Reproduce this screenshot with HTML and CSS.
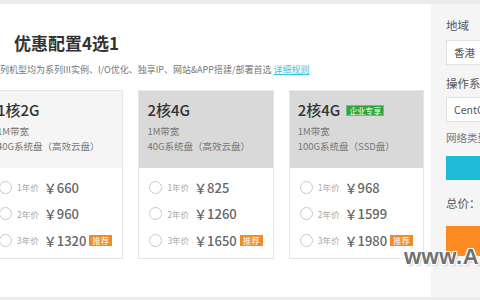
FILE: index.html
```html
<!DOCTYPE html>
<html lang="zh-CN">
<head>
    <meta charset="UTF-8">
    <meta name="viewport" content="width=device-width, initial-scale=1.0">
    <title>优惠配置4选1</title>
    <link rel="stylesheet" href="styles.css">
</head>
<body>
    <div class="page">
        <div class="strip"></div>

        <div class="main">
            <!-- 左侧：套餐列表 -->
            <div class="content">
                <h1 class="title">优惠配置4选1</h1>
                <p class="intro">本系列机型均为系列III实例、I/O优化、独享IP、网站&amp;APP搭建/部署首选 <a href="#">详细规则</a></p>

                <div class="cards">
                    <div class="card">
                        <div class="card-head light">
                            <div class="card-title">1核2G</div>
                            <div class="spec">1M带宽</div>
                            <div class="spec">40G系统盘（高效云盘）</div>
                        </div>
                        <div class="card-body">
                            <label class="price-row"><span class="radio"></span><span class="term">1年价</span><span class="price">￥660</span></label>
                            <label class="price-row"><span class="radio"></span><span class="term">2年价</span><span class="price">￥960</span></label>
                            <label class="price-row"><span class="radio"></span><span class="term">3年价</span><span class="price">￥1320</span><span class="tag">推荐</span></label>
                        </div>
                    </div>

                    <div class="card">
                        <div class="card-head">
                            <div class="card-title">2核4G</div>
                            <div class="spec">1M带宽</div>
                            <div class="spec">40G系统盘（高效云盘）</div>
                        </div>
                        <div class="card-body">
                            <label class="price-row"><span class="radio"></span><span class="term">1年价</span><span class="price">￥825</span></label>
                            <label class="price-row"><span class="radio"></span><span class="term">2年价</span><span class="price">￥1260</span></label>
                            <label class="price-row"><span class="radio"></span><span class="term">3年价</span><span class="price">￥1650</span><span class="tag">推荐</span></label>
                        </div>
                    </div>

                    <div class="card">
                        <div class="card-head">
                            <div class="card-title">2核4G <span class="vip">企业专享</span></div>
                            <div class="spec">1M带宽</div>
                            <div class="spec">100G系统盘（SSD盘）</div>
                        </div>
                        <div class="card-body">
                            <label class="price-row"><span class="radio"></span><span class="term">1年价</span><span class="price">￥968</span></label>
                            <label class="price-row"><span class="radio"></span><span class="term">2年价</span><span class="price">￥1599</span></label>
                            <label class="price-row"><span class="radio"></span><span class="term">3年价</span><span class="price">￥1980</span><span class="tag">推荐</span></label>
                        </div>
                    </div>
                </div>
            </div>

            <!-- 右侧：购买选项 -->
            <div class="side">
                <div class="side-label">地域</div>
                <div class="select">香港</div>
                <div class="side-label os">操作系统</div>
                <div class="select os-select">CentOS 7.2 64位</div>
                <div class="side-label net">网络类型</div>
                <div class="btn-net">专有网络</div>
                <div class="side-label total">总价：</div>
                <div class="btn-buy">立即购买</div>
            </div>
        </div>

        <div class="strip bottom"></div>

        <div class="watermark">www.A</div>
    </div>
</body>
</html>
```

FILE: styles.css
```css
body {
    margin: 0;
    font-family: "Noto Sans CJK SC", "Noto Sans", sans-serif;
    color: #333;
    background-color: #fff;
}
.page {
    position: relative;
    width: 480px;
    height: 300px;
    overflow: hidden;
    display: flex;
    flex-direction: column;
}
.strip {
    height: 4px;
    background-color: #ebebeb;
}
.strip.bottom {
    height: 3px;
}
.main {
    flex: 1;
    display: flex;
    min-height: 0;
}
.content {
    flex: 1;
    min-width: 0;
    overflow: hidden;
    padding-top: 27px;
}
.title {
    margin: 0 0 0 14px;
    font-size: 17px;
    line-height: 24px;
    font-weight: 700;
    color: #333;
}
.intro {
    margin: 8px 0 0 -18px;
    font-size: 9px;
    line-height: 14px;
    color: #777;
    white-space: nowrap;
}
.intro a {
    color: #3cc3dd;
    text-decoration: underline;
}
.cards {
    display: flex;
    gap: 15px;
    margin: 13px 0 0 -12px;
}
.card {
    flex: 0 0 132px;
    border: 1px solid #e6e6e6;
    box-sizing: border-box;
    background-color: #fff;
}
.card-head {
    background-color: #d9d9d9;
    padding: 9px 8px 14px;
    height: 77px;
    box-sizing: border-box;
}
.card-head.light {
    background-color: #f5f5f5;
}
.card-title {
    display: flex;
    align-items: center;
    gap: 6px;
    font-size: 15px;
    line-height: 20px;
    font-weight: 500;
    color: #333;
    margin-bottom: 4px;
}
.vip {
    font-size: 8px;
    line-height: 9px;
    padding: 0 2px;
    color: #fff;
    background-color: #2ea63c;
    border: 1px solid #66c66f;
    font-weight: 400;
}
.spec {
    font-size: 9.5px;
    line-height: 15px;
    color: #777;
    white-space: nowrap;
}
.card-body {
    padding: 6px 10px 4px;
}
.price-row {
    display: flex;
    align-items: center;
    height: 26.5px;
    white-space: nowrap;
}
.radio {
    width: 11px;
    height: 11px;
    border: 1px solid #c9c9c9;
    border-radius: 50%;
    margin-right: 5px;
}
.term {
    font-size: 8.5px;
    color: #aaa;
    margin-right: 5px;
}
.price {
    font-size: 13px;
    color: #666;
    font-weight: 500;
}
.tag {
    margin-left: 3px;
    font-size: 8.5px;
    line-height: 11px;
    padding: 0 3px;
    color: #fff;
    background-color: #f28b25;
}
.side {
    flex: 0 0 49px;
    background-color: #f5f5f5;
    padding-left: 15px;
    box-sizing: border-box;
    overflow: hidden;
    padding-top: 13px;
}
.side-label {
    width: 150px;
    font-size: 11.5px;
    line-height: 16px;
    color: #555;
}
.side-label.os {
    margin-top: 10px;
}
.side-label.net {
    margin-top: 8px;
    font-size: 10.5px;
    color: #777;
}
.side-label.total {
    margin-top: 15px;
}
.select {
    width: 150px;
    height: 25px;
    margin-top: 7px;
    padding-left: 7px;
    box-sizing: border-box;
    background-color: #fff;
    border: 1px solid #e2e2e2;
    font-size: 10.5px;
    line-height: 23px;
    color: #555;
    white-space: nowrap;
}
.select.os-select {
    margin-top: 6px;
}
.btn-net {
    width: 150px;
    height: 24px;
    margin-top: 10px;
    background-color: #1fbcd8;
    color: #fff;
    font-size: 11px;
    line-height: 24px;
    text-align: center;
}
.btn-buy {
    width: 150px;
    height: 30px;
    margin-top: 15px;
    background-color: #fb8b20;
    color: #fff;
    font-size: 12px;
    line-height: 30px;
    text-align: center;
}
.watermark {
    position: absolute;
    left: 404px;
    top: 244px;
    font-family: "Liberation Sans", Arial, sans-serif;
    font-size: 22px;
    font-weight: 700;
    color: #717171;
    letter-spacing: 0.5px;
    white-space: nowrap;
    text-shadow: 1px 1px 0 #fff, -1px -1px 0 #fff, 1px -1px 0 #fff, -1px 1px 0 #fff, 2px 2px 2px #ccc;
}
```
